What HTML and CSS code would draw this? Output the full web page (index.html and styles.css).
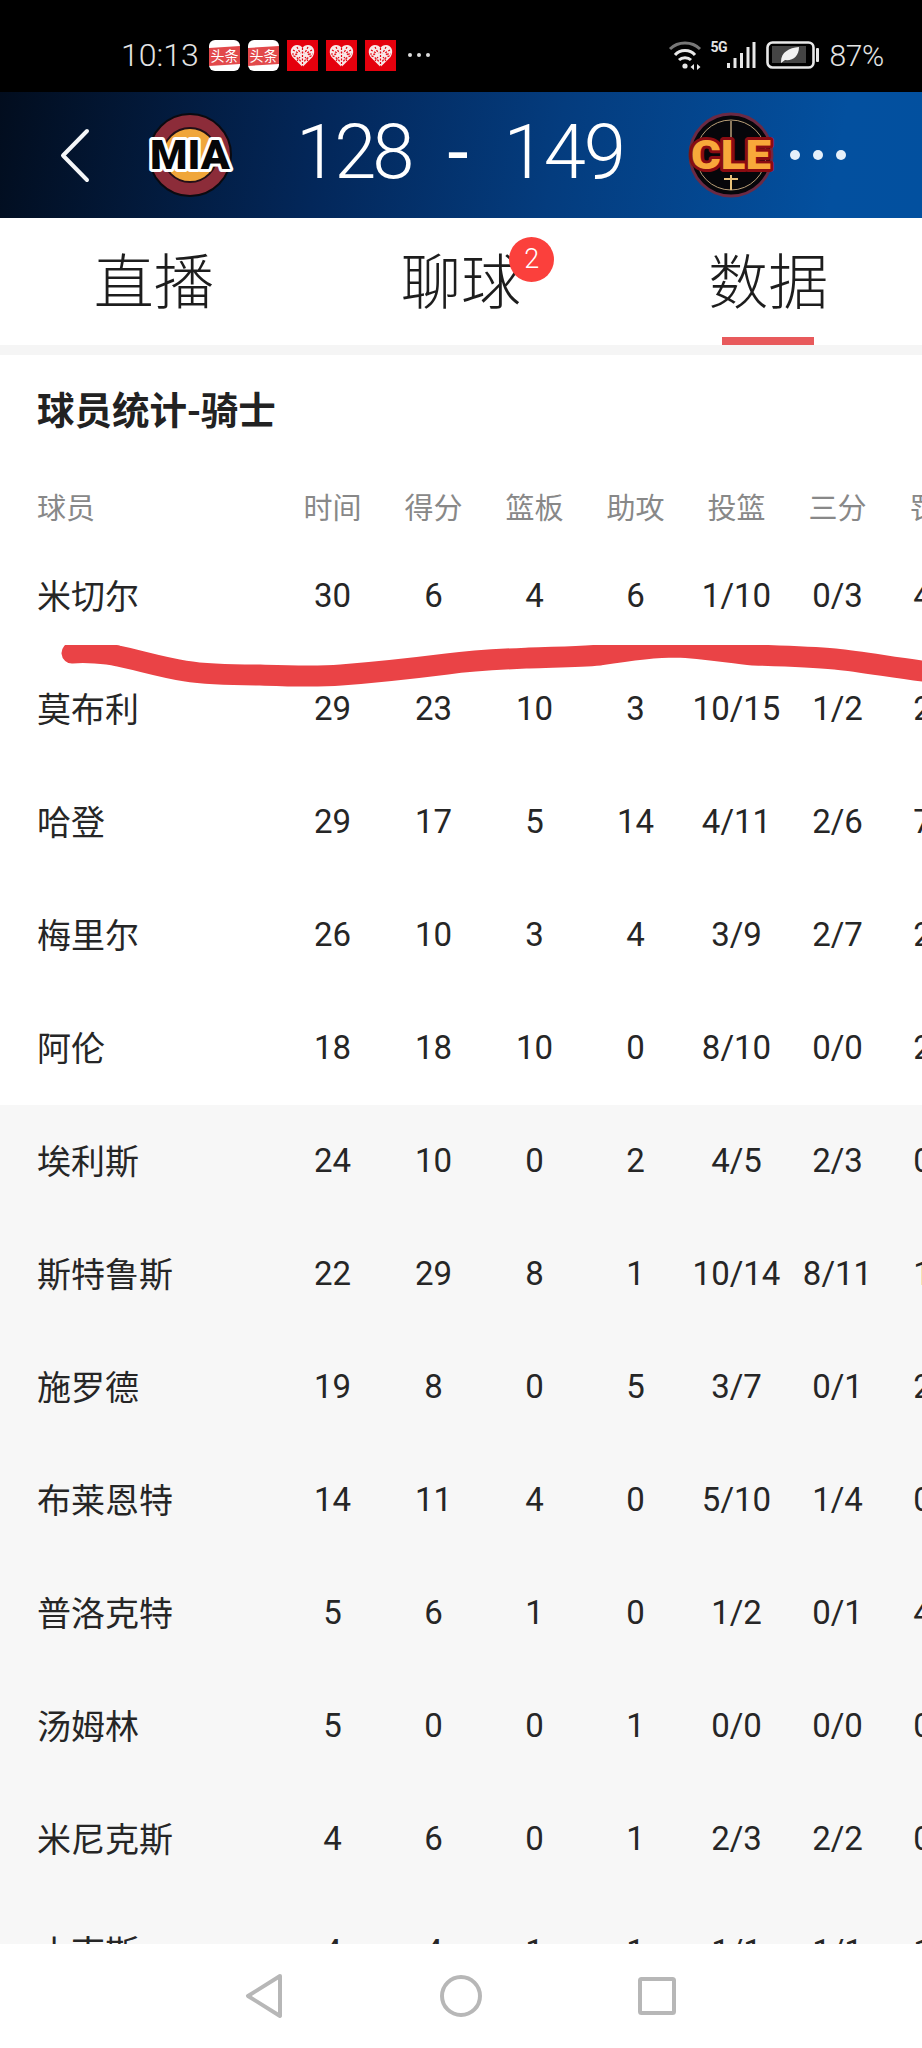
FILE: index.html
```html
<!DOCTYPE html>
<html lang="zh">
<head>
<meta charset="utf-8">
<title>球员统计-骑士</title>
<link rel="stylesheet" href="styles.css">
</head>
<body>
<svg class="defs" width="0" height="0" aria-hidden="true">
  <symbol id="brain" viewBox="0 0 31 31">
    <rect width="31" height="31" fill="#e5000d"/>
    <path d="M15.500 27 L5.500 17 C1.500 11 5 5 10 5 C12.500 5 14.500 6 15.500 8 C16.500 6 18.500 5 21 5 C26 5 29.500 11 25.500 17Z" fill="#f8e8e8"/>
    <g stroke="#e5000d" stroke-width="1.200" fill="none" stroke-dasharray="2 1.500">
      <path d="M15.500 8V27"/>
      <path d="M6 10l5 3-4 3 5 3 2 3"/>
      <path d="M25 10l-5 3 4 3-5 3-2 3"/>
      <path d="M10 7l2 4 2 2"/>
      <path d="M21 7l-2 4-2 2"/>
      <path d="M5 14h4M22 14h4M10 21l3-4M21 21l-3-4"/>
    </g>
  </symbol>
</svg>
<div class="phone">
  <div class="status">
    <span class="clock">10:13</span>
    <div class="notes">
      <svg class="note" viewBox="0 0 31 31"><rect width="31" height="31" rx="6" fill="#fff"/><path d="M0 8 L31 6 V24 L0 26Z" fill="#e2494b"/><text x="15.500" y="21" class="note-text">头条</text></svg>
      <svg class="note" viewBox="0 0 31 31"><rect width="31" height="31" rx="6" fill="#fff"/><path d="M0 8 L31 6 V24 L0 26Z" fill="#e2494b"/><text x="15.500" y="21" class="note-text">头条</text></svg>
      <svg class="note" viewBox="0 0 31 31"><use href="#brain"/></svg>
      <svg class="note" viewBox="0 0 31 31"><use href="#brain"/></svg>
      <svg class="note" viewBox="0 0 31 31"><use href="#brain"/></svg>
    </div>
    <div class="more-small"><i></i><i></i><i></i></div>
    <div class="sys">
      <svg class="wifi" viewBox="0 0 36 30" fill="none">
        <path d="M3 9 C11 1 25 1 33 9" stroke="#777" stroke-width="3"/>
        <path d="M8 15 C13 9 23 9 28 15" stroke="#e8e8e8" stroke-width="3"/>
        <path d="M12 20 C15 17 21 17 24 20" stroke="#e8e8e8" stroke-width="3"/>
        <circle cx="18" cy="26" r="2.600" fill="#e8e8e8"/>
        <path d="M27 24 L23.500 27 L27 30Z M30 24 L33.500 27 L30 30Z" fill="#e8e8e8"/>
      </svg>
      <span class="five-g">5G</span>
      <svg class="bars" viewBox="0 0 30 28"><rect x="1" y="22" width="3" height="5" fill="#e8e8e8"/><rect x="7.500" y="17" width="3" height="10" fill="#e8e8e8"/><rect x="14" y="12" width="3" height="15" fill="#e8e8e8"/><rect x="20.500" y="6" width="3" height="21" fill="#e8e8e8"/><rect x="26.500" y="1" width="3" height="26" fill="#e8e8e8"/></svg>
      <svg class="battery" viewBox="0 0 54 28" fill="none">
        <rect x="1.500" y="1.500" width="46" height="25" rx="5" stroke="#e8e8e8" stroke-width="2.600"/>
        <rect x="6" y="5" width="34" height="17" fill="#444"/>
        <path d="M15 21 C15 11 23 7 33 6 C33 15 27 20 19 19 L15 22Z" fill="#f2f2f2"/>
        <rect x="50" y="7" width="3" height="14" rx="1" fill="#e8e8e8"/>
      </svg>
      <span class="pct">87%</span>
    </div>
  </div>

  <header class="score-bar">
    <svg class="back" viewBox="0 0 30 55" fill="none"><path d="M27 3 L3 27.500 L27 52" stroke="#f4f6f8" stroke-width="4" stroke-linecap="round" stroke-linejoin="round"/></svg>
    <svg class="logo logo-mia" viewBox="0 0 90 88">
      <circle cx="45" cy="44" r="41" fill="#8c2c39" stroke="#0a0a10" stroke-width="2"/>
      <circle cx="45" cy="44" r="27" fill="#f0a63a" stroke="#231018" stroke-width="2"/>
      <text x="45" y="58" class="logo-text mia-text" textLength="80" lengthAdjust="spacingAndGlyphs">MIA</text>
    </svg>
    <div class="score"><span class="home">128</span><span class="dash">-</span><span>149</span></div>
    <svg class="logo logo-cle" viewBox="0 0 90 88">
      <circle cx="45" cy="44" r="41" fill="#06060a" stroke="#6b2a44" stroke-width="3"/>
      <circle cx="45" cy="44" r="35" fill="none" stroke="#b99f78" stroke-width="1"/>
      <path d="M45 10V32" stroke="#b99f78" stroke-width="1.500"/>
      <path d="M45 64V79M38 68H52" stroke="#e9c27a" stroke-width="2"/>
      <text x="45" y="58" class="logo-text cle-text" textLength="80" lengthAdjust="spacingAndGlyphs">CLE</text>
    </svg>
    <div class="more-big"><i></i><i></i><i></i></div>
  </header>

  <nav class="tabs">
    <div class="tab">直播</div>
    <div class="tab">聊球<span class="badge">2</span></div>
    <div class="tab tab-active">数据</div>
  </nav>

  <main class="content">
    <svg class="scribble" viewBox="0 0 922 60" fill="none"><path d="M72 8 C85 7 105 8 118 11 C138 15 160 22 185 26 C210 30 235 30 260 30 C290 31 315 32 341 30 C380 27 415 23 447 19 C478 15 505 14 529 13 C555 12 578 12 600 10 C625 6 650 2 676 2 C705 3 730 8 753 10 C785 11 812 12 835 14 C865 17 895 23 930 27" stroke="#ea4346" stroke-width="21" stroke-linecap="round"/></svg>
    <h1 class="title">球员统计-骑士</h1>
    <div class="row row-head">
      <div class="name">球员</div><div>时间</div><div>得分</div><div>篮板</div><div>助攻</div><div>投篮</div><div>三分</div><div>罚球</div>
    </div>
    <div class="row"><div class="name">米切尔</div><div>30</div><div>6</div><div>4</div><div>6</div><div>1/10</div><div>0/3</div><div>4/6</div></div>
    <div class="row"><div class="name">莫布利</div><div>29</div><div>23</div><div>10</div><div>3</div><div>10/15</div><div>1/2</div><div>2/2</div></div>
    <div class="row"><div class="name">哈登</div><div>29</div><div>17</div><div>5</div><div>14</div><div>4/11</div><div>2/6</div><div>7/9</div></div>
    <div class="row"><div class="name">梅里尔</div><div>26</div><div>10</div><div>3</div><div>4</div><div>3/9</div><div>2/7</div><div>2/3</div></div>
    <div class="row"><div class="name">阿伦</div><div>18</div><div>18</div><div>10</div><div>0</div><div>8/10</div><div>0/0</div><div>2/2</div></div>
    <div class="bench">
      <div class="row"><div class="name">埃利斯</div><div>24</div><div>10</div><div>0</div><div>2</div><div>4/5</div><div>2/3</div><div>0/0</div></div>
      <div class="row"><div class="name">斯特鲁斯</div><div>22</div><div>29</div><div>8</div><div>1</div><div>10/14</div><div>8/11</div><div>1/2</div></div>
      <div class="row"><div class="name">施罗德</div><div>19</div><div>8</div><div>0</div><div>5</div><div>3/7</div><div>0/1</div><div>2/2</div></div>
      <div class="row"><div class="name">布莱恩特</div><div>14</div><div>11</div><div>4</div><div>0</div><div>5/10</div><div>1/4</div><div>0/0</div></div>
      <div class="row"><div class="name">普洛克特</div><div>5</div><div>6</div><div>1</div><div>0</div><div>1/2</div><div>0/1</div><div>4/4</div></div>
      <div class="row"><div class="name">汤姆林</div><div>5</div><div>0</div><div>0</div><div>1</div><div>0/0</div><div>0/0</div><div>0/0</div></div>
      <div class="row"><div class="name">米尼克斯</div><div>4</div><div>6</div><div>0</div><div>1</div><div>2/3</div><div>2/2</div><div>0/0</div></div>
      <div class="row"><div class="name">小南斯</div><div>4</div><div>4</div><div>1</div><div>1</div><div>1/1</div><div>1/1</div><div>1/1</div></div>
    </div>
  </main>

  <footer class="sysnav">
    <svg class="nav-tri" viewBox="0 0 38 46" fill="none"><path d="M35 3 L3 23 L35 43Z" stroke="#b7b7b7" stroke-width="4" stroke-linejoin="round"/></svg>
    <svg class="nav-circle" viewBox="0 0 42 42" fill="none"><circle cx="21" cy="21" r="19" stroke="#b7b7b7" stroke-width="4"/></svg>
    <svg class="nav-square" viewBox="0 0 38 38" fill="none"><rect x="2" y="2" width="34" height="34" rx="1.500" stroke="#b7b7b7" stroke-width="4"/></svg>
  </footer>
</div>
</body>
</html>
```

FILE: styles.css
```css
* { box-sizing: border-box; }
html, body { margin: 0; padding: 0; }
body { background: #fff; font-family: "Roboto", "Noto Sans CJK SC", sans-serif; }
.defs { display: block; height: 0; }

.phone {
  width: 922px;
  height: 2048px;
  display: flex;
  flex-direction: column;
  overflow: hidden;
  background: #fff;
}

/* status bar */
.status {
  flex: 0 0 92px;
  background: #000;
  display: flex;
  align-items: center;
  padding: 18px 38px 0 121px;
  color: #e4e4e4;
}
.clock { font-size: 32px; font-weight: 300; width: 88px; }
.notes { display: flex; gap: 8px; align-items: center; }
.note { width: 31px; height: 31px; display: block; }
.note-text {
  font-family: "Noto Sans CJK SC", sans-serif;
  font-size: 14px;
  font-weight: 400;
  fill: #fff;
  text-anchor: middle;
}
.more-small { display: flex; gap: 5px; margin-left: 12px; }
.more-small i { width: 4px; height: 4px; border-radius: 50%; background: #ddd; display: block; }
.sys { margin-left: auto; display: flex; align-items: center; }
.wifi { width: 36px; height: 30px; display: block; }
.five-g { font-size: 14px; font-weight: 700; width: 16px; margin: -16px 0 0 7px; letter-spacing: -0.5px; }
.bars { width: 30px; height: 28px; display: block; }
.battery { width: 54px; height: 28px; display: block; margin-left: 10px; }
.pct { font-size: 30px; font-weight: 300; margin-left: 9px; letter-spacing: -0.3px; }

/* score header */
.score-bar {
  flex: 0 0 126px;
  display: flex;
  align-items: center;
  padding-left: 60px;
  background: linear-gradient(100deg, #020d1e 0%, #03275a 35%, #043c7e 60%, #03509f 90%, #02509f 100%);
  color: #fff;
}
.back { width: 30px; height: 55px; display: block; }
.logo { width: 90px; height: 88px; display: block; }
.logo-mia { margin-left: 55px; }
.logo-text {
  font-family: "Roboto", sans-serif;
  font-weight: 900;
  font-size: 41px;
  text-anchor: middle;
  paint-order: stroke;
  stroke-linejoin: round;
}
.mia-text { fill: #060608; stroke: #fff; stroke-width: 6px; }
.cle-text { fill: #f8a83a; stroke: #8a0c12; stroke-width: 6px; }
.score {
  width: 328px;
  margin-left: 61px;
  padding-bottom: 6px;
  display: flex;
  justify-content: space-between;
  align-items: center;
  font-size: 76px;
  font-weight: 300;
  line-height: 1;
  letter-spacing: -2px;
}
.home { letter-spacing: -4px; }
.dash { font-size: 76px; font-weight: 400; }
.logo-cle { margin-left: 62px; }
.more-big { display: flex; gap: 13px; margin-left: 14px; }
.more-big i { width: 10px; height: 10px; border-radius: 50%; background: #e6f0fa; display: block; }

/* tabs */
.tabs {
  flex: 0 0 127px;
  display: flex;
  font-family: "Noto Sans CJK SC", sans-serif;
}
.tab {
  flex: 1;
  position: relative;
  display: flex;
  align-items: center;
  justify-content: center;
  font-size: 60px;
  font-weight: 300;
  line-height: 1;
  color: #1d1d1d;
  padding-bottom: 7px;
}
.tab-active::after {
  content: "";
  position: absolute;
  left: 107px;
  bottom: 0;
  width: 92px;
  height: 8px;
  background: #e85a5c;
}
.badge {
  position: absolute;
  left: 202px;
  top: 19px;
  width: 45px;
  height: 45px;
  border-radius: 50%;
  background: #fb403c;
  color: #fff;
  font-family: "Roboto", sans-serif;
  font-size: 27px;
  font-weight: 300;
  display: flex;
  align-items: center;
  justify-content: center;
}

/* content */
.content {
  flex: 1;
  min-height: 0;
  position: relative;
  overflow: hidden;
  border-top: 10px solid #f5f5f5;
}
.scribble {
  position: absolute;
  left: 0;
  top: 290px;
  width: 922px;
  height: 60px;
  z-index: 2;
}
.title {
  margin: 0;
  padding: 33px 0 0 37px;
  height: 118px;
  font-family: "Noto Sans CJK SC", sans-serif;
  font-size: 37.5px;
  line-height: 40px;
  font-weight: 700;
  color: #222;
}
.row {
  display: grid;
  grid-template-columns: 282px repeat(7, 101px);
  width: 989px;
  height: 113px;
  padding-bottom: 2px;
  align-items: center;
  text-align: center;
  font-size: 33px;
  color: #262626;
  white-space: nowrap;
}
.row .name {
  text-align: left;
  padding: 0 0 3px 37px;
  font-family: "Noto Sans CJK SC", sans-serif;
  font-size: 34px;
}
.row-head {
  height: 67px;
  font-family: "Noto Sans CJK SC", sans-serif;
  font-size: 29px;
  color: #888;
}
.row-head .name { font-size: 29px; padding-bottom: 0; }
.bench { background: #f7f7f7; width: 922px; overflow: hidden; height: 839px; }

/* system nav */
.sysnav {
  flex: 0 0 104px;
  background: #fff;
  display: flex;
  align-items: center;
  padding: 0 0 0 245px;
}
.nav-tri { width: 38px; height: 46px; display: block; }
.nav-circle { width: 42px; height: 42px; display: block; margin-left: 157px; }
.nav-square { width: 38px; height: 38px; display: block; margin-left: 156px; }
```
